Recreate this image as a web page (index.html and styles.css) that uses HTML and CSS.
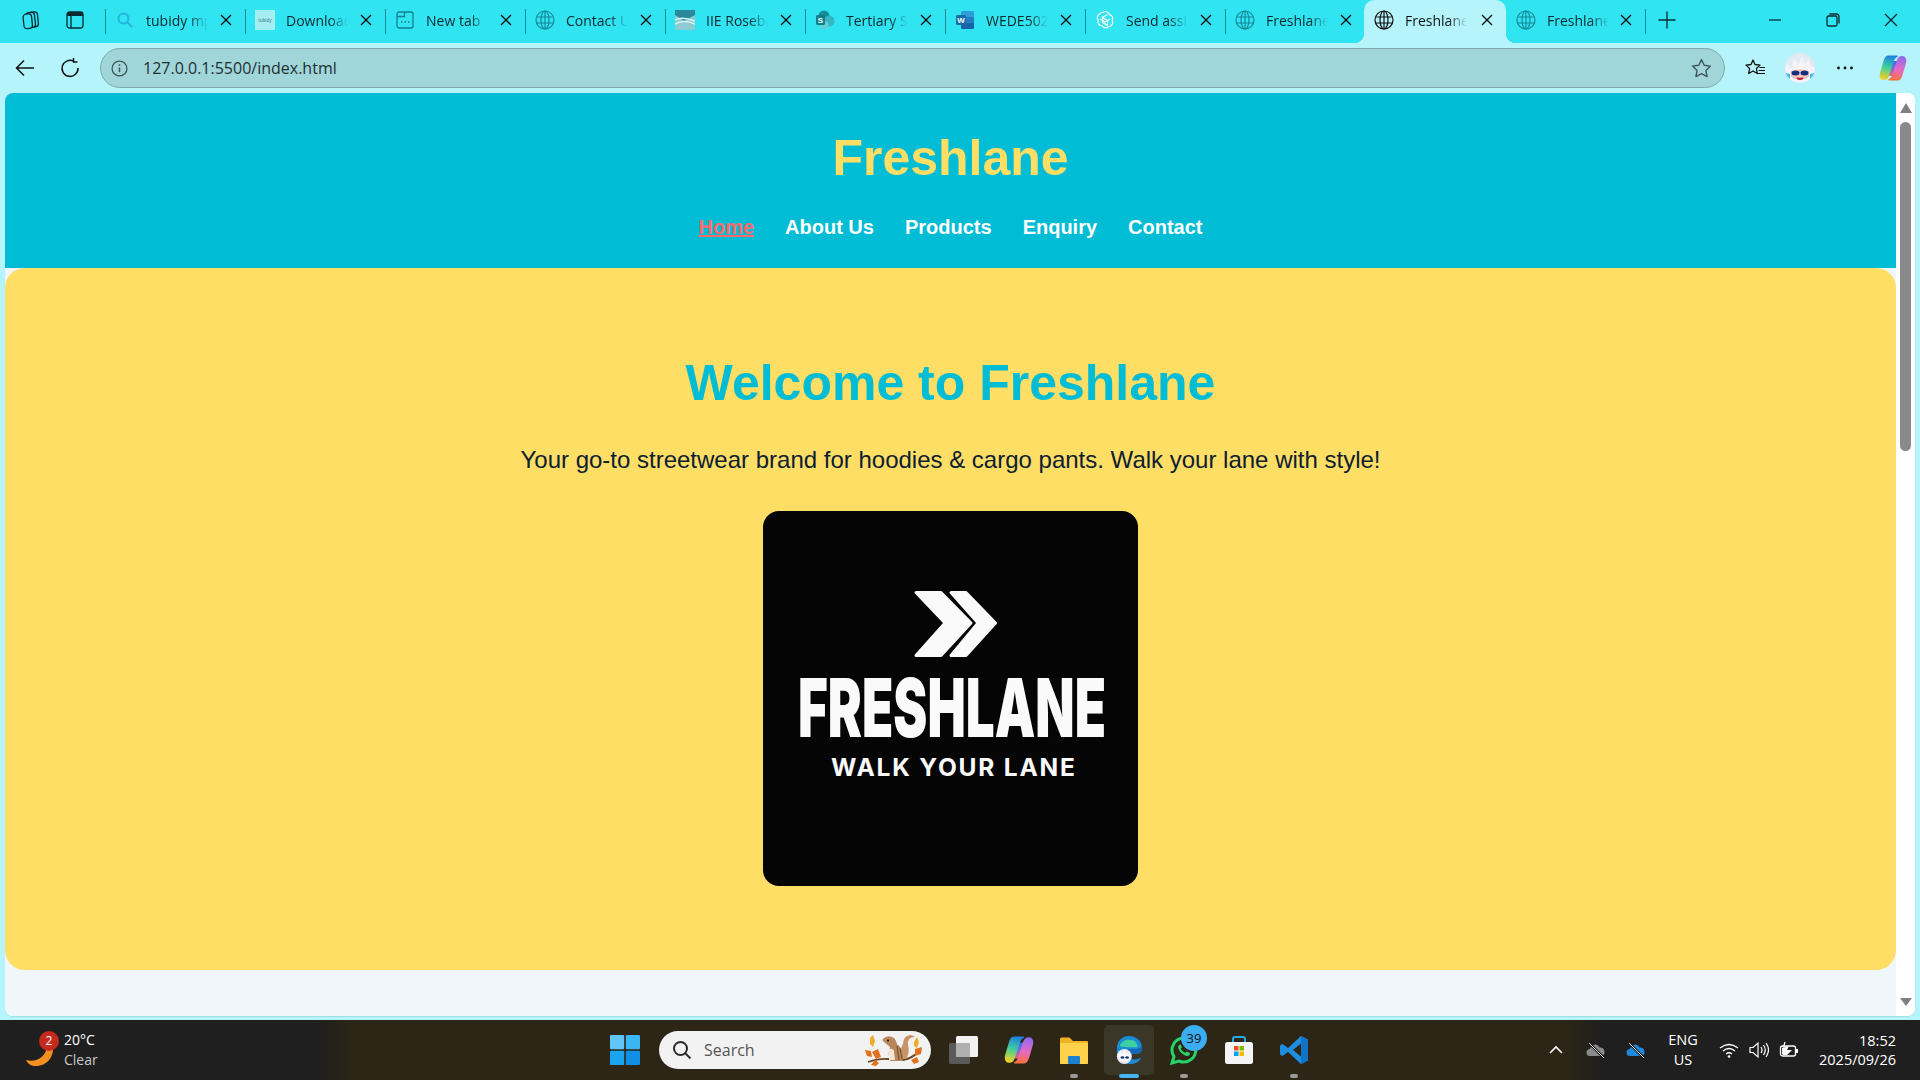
FILE: index.html
```html
<!DOCTYPE html>
<html lang="en">
<head>
<meta charset="utf-8">
<title>Freshlane</title>
<link rel="stylesheet" href="styles.css">
</head>
<body>
<div class="tabstrip">
  <div class="strip-tools">
    <svg class="ic20" viewBox="0 0 20 20"><rect x="8" y="2" width="9" height="15" rx="3" class="ln" transform="rotate(-6 12 10)"/><rect x="5" y="2.500" width="9" height="15" rx="3" class="ln fillstrip" transform="rotate(-6 10 10)"/><rect x="2.500" y="4" width="8.500" height="14.500" rx="3" class="ln fillstrip" transform="rotate(-6 7 11)"/></svg>
    <svg class="ic20" viewBox="0 0 20 20"><rect x="2" y="2" width="16" height="16" rx="2.500" class="ln"/><path d="M2 4.500a2.500 2.500 0 0 1 2.500-2.500h11a2.500 2.500 0 0 1 2.500 2.500V6H2z" fill="#0b2a30"/><path d="M6 6v12" class="ln"/></svg>
  </div>
  <div class="tab"><svg class="fav" viewBox="0 0 20 20"><circle cx="8.500" cy="8.500" r="5" fill="none" stroke="#25b5dc" stroke-width="2"/><path d="M12 12l5 5" stroke="#25b5dc" stroke-width="2"/></svg><span class="tab-title">tubidy mp3</span><svg class="x" viewBox="0 0 12 12"><use href="#close"/></svg></div>
  <div class="tab"><span class="fav tubidy">tubidy</span><span class="tab-title">Download</span><svg class="x" viewBox="0 0 12 12"><use href="#close"/></svg></div>
  <div class="tab"><svg class="fav" viewBox="0 0 20 20"><path d="M4 2h12a2 2 0 0 1 2 2v12a2 2 0 0 1-2 2H4a2 2 0 0 1-2-2V4a2 2 0 0 1 2-2zM2 6.500h7.500V2" fill="none" stroke="#137f8c" stroke-width="1.300"/><path d="M6 12h1.500M9.500 12H11M13 12h1.500" stroke="#137f8c" stroke-width="1.500"/></svg><span class="tab-title">New tab</span><svg class="x" viewBox="0 0 12 12"><use href="#close"/></svg></div>
  <div class="tab"><svg class="fav" viewBox="0 0 20 20"><use href="#globe" stroke="#178a98"/></svg><span class="tab-title">Contact Us</span><svg class="x" viewBox="0 0 12 12"><use href="#close"/></svg></div>
  <div class="tab"><svg class="fav" viewBox="0 0 20 20"><rect width="20" height="20" fill="#8ccbd3"/><path d="M0 0h20v5L9 11 0 5z" fill="#2a8a9c"/><path d="M0 10q7-4 20 1M0 14q9-5 20 0" fill="none" stroke="#d9f2f5" stroke-width="1.500"/></svg><span class="tab-title">IIE Rosebank</span><svg class="x" viewBox="0 0 12 12"><use href="#close"/></svg></div>
  <div class="tab"><svg class="fav" viewBox="0 0 20 20"><circle cx="9" cy="6" r="5.500" fill="#138f9b"/><circle cx="14" cy="11" r="5.500" fill="#35b6c2"/><circle cx="9" cy="15" r="4.500" fill="#5fd0d8"/><rect x="1" y="5" width="9" height="10" rx="1.500" fill="#0e7f8a"/><text x="5.500" y="13" class="fav-letter">S</text></svg><span class="tab-title">Tertiary Study</span><svg class="x" viewBox="0 0 12 12"><use href="#close"/></svg></div>
  <div class="tab"><svg class="fav" viewBox="0 0 20 20"><rect x="6" y="1" width="13" height="18" rx="1.500" fill="#2f9ed8"/><path d="M6 7h13v6H6z" fill="#1f7fc2"/><path d="M6 13h13v4.500a1.500 1.500 0 0 1-1.500 1.500H7.500A1.500 1.500 0 0 1 6 17.500z" fill="#1763a8"/><rect x="1" y="5" width="10" height="10" rx="1.200" fill="#136ba8"/><text x="6" y="13" class="fav-letter">W</text></svg><span class="tab-title">WEDE5020</span><svg class="x" viewBox="0 0 12 12"><use href="#close"/></svg></div>
  <div class="tab"><svg class="fav" viewBox="0 0 20 20"><path d="M8 2.500a4 4 0 0 1 6.500 2.200 4 4 0 0 1 2.700 6 4 4 0 0 1-3.500 5.800 4 4 0 0 1-6.500-.8 4 4 0 0 1-4-5.500 4 4 0 0 1 1.200-6 4 4 0 0 1 3.600-1.700zM7.500 6.500v6l5 3M12.500 4.500l-5 3 5 3v5M5 9l5 3 5-3" fill="none" stroke="#fff" stroke-width="1.200"/></svg><span class="tab-title">Send assignment</span><svg class="x" viewBox="0 0 12 12"><use href="#close"/></svg></div>
  <div class="tab"><svg class="fav" viewBox="0 0 20 20"><use href="#globe" stroke="#178a98"/></svg><span class="tab-title">Freshlane</span><svg class="x" viewBox="0 0 12 12"><use href="#close"/></svg></div>
  <div class="tab tab-active"><svg class="fav" viewBox="0 0 20 20"><use href="#globe" stroke="#111"/></svg><span class="tab-title">Freshlane</span><svg class="x" viewBox="0 0 12 12"><use href="#close"/></svg></div>
  <div class="tab tab-after"><svg class="fav" viewBox="0 0 20 20"><use href="#globe" stroke="#178a98"/></svg><span class="tab-title">Freshlane</span><svg class="x" viewBox="0 0 12 12"><use href="#close"/></svg></div>
  <div class="plus"><svg class="ic20" viewBox="0 0 20 20"><path d="M10 1.500v17M1.500 10h17" class="ln"/></svg></div>
  <div class="win-controls">
    <svg class="ic14" viewBox="0 0 14 14"><path d="M1 7h12" class="ln"/></svg>
    <svg class="ic14" viewBox="0 0 14 14"><rect x="1" y="3" width="10" height="10" rx="1.500" class="ln"/><path d="M3.500 1h7a2.500 2.500 0 0 1 2.500 2.500v7" class="ln"/></svg>
    <svg class="ic14" viewBox="0 0 14 14"><path d="M1 1l12 12M13 1L1 13" class="ln"/></svg>
  </div>
</div>

<div class="toolbar">
  <svg class="ic20 nav-ic" viewBox="0 0 20 20"><path d="M19 10H1.500M9 2.500L1.500 10 9 17.500" class="ln dark"/></svg>
  <svg class="ic20 nav-ic" viewBox="0 0 20 20"><path d="M13.500 3.200A8 8 0 1 0 18 10M13.500 0v4h4" class="ln dark"/></svg>
  <div class="address">
    <svg class="info" viewBox="0 0 16 16"><circle cx="8" cy="8" r="7" fill="none" stroke="#3d5558" stroke-width="1.200"/><path d="M8 7v4.500" stroke="#3d5558" stroke-width="1.400"/><circle cx="8" cy="4.800" r=".9" fill="#3d5558"/></svg>
    <span class="url">127.0.0.1:5500/index.html</span>
    <svg class="star" viewBox="0 0 20 20"><path d="M10 1.500l2.600 5.400 5.900.8-4.300 4.100 1.100 5.900L10 14.900l-5.300 2.800 1.100-5.900L1.500 7.700l5.900-.8z" fill="none" stroke="#3d5558" stroke-width="1.300" stroke-linejoin="round"/></svg>
  </div>
  <div class="tool-right">
    <svg class="ic20" viewBox="0 0 20 20"><path d="M8 2l2 4.500 5 .6-3.600 3.400.9 5-4.300-2.500-4.300 2.500.9-5L1 7.100l5-.6z" fill="none" stroke="#101010" stroke-width="1.300" stroke-linejoin="round"/><path d="M14.500 9.500H20M13.500 12.500H20M13 15.500h7" stroke="#101010" stroke-width="1.200"/></svg>
    <svg class="avatar" viewBox="0 0 30 30"><defs><clipPath id="av"><circle cx="15" cy="15" r="15"/></clipPath></defs><g clip-path="url(#av)"><rect width="30" height="30" fill="#dfeaf3"/><path d="M0 30V15l3-5 3 6 3-11 4 7 4-9 3 8 4-5 2 7 4 2v15z" fill="#f5f2f8"/><path d="M6 18q9-3 18 0v6q-9 5-18 0z" fill="#f0c3bd"/><ellipse cx="10.500" cy="20" rx="4" ry="2.500" fill="#142f7c"/><ellipse cx="19.500" cy="20" rx="4" ry="2.500" fill="#142f7c"/><path d="M12 25q3 2 6 0" stroke="#b6203c" stroke-width="2" fill="none"/><path d="M0 20l5 1v9H0zM30 20l-5 1v9h5z" fill="#49b7e8"/></g></svg>
    <svg class="ic20" viewBox="0 0 20 20"><circle cx="3.500" cy="10" r="1.400" fill="#111"/><circle cx="10" cy="10" r="1.400" fill="#111"/><circle cx="16.500" cy="10" r="1.400" fill="#111"/></svg>
    <svg class="copilot" viewBox="0 0 28 28"><use href="#copilot"/></svg>
  </div>
</div>

<div class="viewport">
  <div class="page">
    <header class="site-header">
      <h1 class="brand">Freshlane</h1>
      <nav class="site-nav">
        <a class="nav-link nav-current" href="#">Home</a>
        <a class="nav-link" href="#">About Us</a>
        <a class="nav-link" href="#">Products</a>
        <a class="nav-link" href="#">Enquiry</a>
        <a class="nav-link" href="#">Contact</a>
      </nav>
    </header>
    <main class="hero">
      <h2 class="hero-title">Welcome to Freshlane</h2>
      <p class="hero-text">Your go-to streetwear brand for hoodies &amp; cargo pants. Walk your lane with style!</p>
      <svg class="logo" viewBox="0 0 375 375" role="img" aria-label="Freshlane logo">
        <rect width="375" height="375" rx="16" fill="#050505"/>
        <path d="M153 81.500h25L208 112l-30 32.500h-25L182 112z" class="logo-chevron"/>
        <path d="M188 81.500h15L232.500 112 203 144.500h-15L215 112z" class="logo-chevron"/>
        <text x="35" y="226" class="logo-main" textLength="308" lengthAdjust="spacingAndGlyphs">FRESHLANE</text>
        <text x="68" y="265" class="logo-sub" textLength="244" lengthAdjust="spacing">WALK YOUR LANE</text>
      </svg>
    </main>
  </div>
  <div class="scrollbar">
    <span class="arrow-up"></span>
    <span class="thumb"></span>
    <span class="arrow-down"></span>
  </div>
</div>

<div class="taskbar">
  <div class="weather">
    <div class="weather-icon">
      <svg class="moon" viewBox="0 0 28 24"><path d="M27 2c1 11-6 20-17 20C5 22 2 20 0 16c10 3 20-3 21-14z" fill="#f2901f"/></svg>
      <span class="badge-red">2</span>
    </div>
    <div class="weather-text"><span class="temp">20°C</span><span class="cond">Clear</span></div>
  </div>
  <div class="task-center">
    <svg class="task-ic" viewBox="0 0 30 30"><rect x="0" y="0" width="14.200" height="14.200" rx="1" fill="#5fc6f7"/><rect x="15.800" y="0" width="14.200" height="14.200" rx="1" fill="#3ab6f5"/><rect x="0" y="15.800" width="14.200" height="14.200" rx="1" fill="#1aa3ef"/><rect x="15.800" y="15.800" width="14.200" height="14.200" rx="1" fill="#0f90e6"/></svg>
    <div class="search">
      <svg class="search-ic" viewBox="0 0 20 20"><circle cx="8.500" cy="8.500" r="6.500" fill="none" stroke="#2a2a2a" stroke-width="2"/><path d="M13 13l5.500 5.500" stroke="#2a2a2a" stroke-width="2"/></svg>
      <span class="search-label">Search</span>
      <svg class="squirrel" viewBox="0 0 60 32">
        <path d="M3 28q12-4 20-3t16 1q8-2 13-7" stroke="#6d4526" stroke-width="1.800" fill="none"/>
        <path d="M0 16l6 1 1 6-5-1zM7 18l6-3 3 8-5 2zM50 15l7-2-1 7-6 2zM46 26l6-3 2 5-5 2zM6 31l4-5 4 3-3 3z" fill="#e2711d"/>
        <path d="M5 4l3-3 2 6-2 6-3-3zM49 8l3-5 2 5-2 6-3-2z" fill="#eeab2d"/>
        <path d="M37 25q-3-9 1-15 0-8 7-9 3 0 5 2-8 0-7 8 2 8-2 14z" fill="#c79468"/>
        <path d="M19 8q-3-2 0-4 4-3 8-1 3 1 4 4l1 3q6 4 6 17l-12 0q-4-6-1-14z" fill="#b9875a"/>
        <path d="M32 12l2 14M35 14l2 11" stroke="#6b4a2c" stroke-width="1"/>
        <path d="M24 15q4-1 5 2l1 9h-6z" fill="#f3e6d4"/>
        <circle cx="23" cy="6.500" r="1" fill="#111"/>
      </svg>
    </div>
    <svg class="task-ic" viewBox="0 0 30 30"><rect x="0" y="8" width="21" height="21" rx="1.500" fill="#5a5a5a"/><rect x="7" y="1" width="22" height="21" rx="1.500" fill="#f2f2f2"/><rect x="7" y="8" width="14" height="14" fill="#b0b0b0"/></svg>
    <svg class="task-ic" viewBox="0 0 28 28"><use href="#copilot"/></svg>
    <div class="app">
      <svg class="task-ic" viewBox="0 0 30 30"><path d="M1 4a1.500 1.500 0 0 1 1.500-1.500h8L14 6h14a1 1 0 0 1 1 1v21a1 1 0 0 1-1 1H2a1 1 0 0 1-1-1z" fill="#f0b323"/><rect x="1" y="8" width="28" height="21" rx="1" fill="#ffd24d"/><rect x="9" y="21" width="12" height="8" rx="1" fill="#1c7fd0"/></svg>
      <span class="dot"></span>
    </div>
    <div class="app app-active">
      <svg class="task-ic" viewBox="0 0 30 32"><path d="M2 15C2 6 8 1 15 1c8 0 14 6 14 13 0 4-3 6-7 6h-8c0 3 3 6 7 6 3 0 5-1 7-2-2 5-7 7-12 7C7 31 2 24 2 15z" fill="#1b8bd3"/><path d="M5 12c2-5 6-7 10-7 6 0 9 3 9 8h-9c-5 0-8-1-10-1z" fill="#3fd0a0"/><path d="M14 20h8c4 0 7-2 7-6 0-7-6-13-14-13 9 0 13 5 13 10 0 3-3 4-6 4h-8z" fill="#1565b5"/><circle cx="10" cy="23" r="8" fill="#e9e6f0"/><path d="M3 21l3-4 2 3 2-5 3 5 2-3 2 5q-1 4-3 6H6q-2-2-3-7z" fill="#fbfbff"/><ellipse cx="8" cy="24" rx="2" ry="1.300" fill="#15337c"/><ellipse cx="13" cy="24" rx="2" ry="1.300" fill="#15337c"/></svg>
      <span class="dot dot-active"></span>
    </div>
    <div class="app">
      <svg class="task-ic" viewBox="0 0 30 30"><path d="M15 3a12 12 0 0 0-10 18.500L3 28l7-2A12 12 0 1 0 15 3z" fill="none" stroke="#25d366" stroke-width="3"/><path d="M10 10c-2 2 0 6 3 8.500s6 3.500 7.500 1.500l.5-2-3.500-1.500-1.300 1.300c-2-.8-3.500-2.300-4.500-4.300l1.300-1.300-1.500-3z" fill="#25d366"/></svg>
      <span class="count">39</span>
      <span class="dot"></span>
    </div>
    <div class="app">
      <svg class="task-ic" viewBox="0 0 30 30"><path d="M9 8V4a2 2 0 0 1 2-2h8a2 2 0 0 1 2 2v4" fill="none" stroke="#25a8e0" stroke-width="2"/><rect x="1" y="7" width="28" height="22" rx="2.500" fill="#f4f4f4"/><rect x="10" y="11" width="4.500" height="4.500" fill="#f25022"/><rect x="15.500" y="11" width="4.500" height="4.500" fill="#7fba00"/><rect x="10" y="16.500" width="4.500" height="4.500" fill="#00a4ef"/><rect x="15.500" y="16.500" width="4.500" height="4.500" fill="#ffb900"/></svg>
    </div>
    <div class="app">
      <svg class="task-ic" viewBox="0 0 30 30"><path d="M22 1l7 3.500v21L22 29 9 17l-5.500 4L1 19.500v-9L3.500 9 9 13zM22 8.500L14 15l8 6.500z" fill="#1e8fe0"/><path d="M22 1l7 3.500v21L22 29z" fill="#0f74c6"/></svg>
      <span class="dot"></span>
    </div>
  </div>
  <div class="tray">
    <svg class="tray-ic" viewBox="0 0 20 20"><path d="M4 13l6-6 6 6" fill="none" stroke="#fff" stroke-width="1.600"/></svg>
    <svg class="tray-ic" viewBox="0 0 20 20"><path d="M4 16a3.500 3.500 0 0 1 0-7 5 5 0 0 1 9.500-1.500A4.500 4.500 0 0 1 16 16z" fill="#8a8a8a"/><path d="M3 3l15 15" stroke="#1f1f1f" stroke-width="2.500"/><path d="M3 3l15 15" stroke="#ddd" stroke-width="1"/></svg>
    <svg class="tray-ic" viewBox="0 0 20 20"><path d="M4 16a3.500 3.500 0 0 1 0-7 5 5 0 0 1 9.500-1.500A4.500 4.500 0 0 1 16 16z" fill="#1e88dc"/><path d="M3 3l15 15" stroke="#1f1f1f" stroke-width="2.500"/><path d="M3 3l15 15" stroke="#ddd" stroke-width="1"/></svg>
    <div class="lang"><span>ENG</span><span>US</span></div>
    <div class="sys-icons">
      <svg class="tray-ic" viewBox="0 0 20 20"><path d="M1 8q9-7 18 0M4 11q6-5 12 0M7 14q3-2.500 6 0" fill="none" stroke="#fff" stroke-width="1.300"/><circle cx="10" cy="16.500" r="1.300" fill="#fff"/></svg>
      <svg class="tray-ic" viewBox="0 0 20 20"><path d="M1 7.500v5h3l5 4.500V3L4 7.500z" fill="none" stroke="#fff" stroke-width="1.200"/><path d="M12 7q2 3 0 6M14.500 5q3.500 5 0 10M17 3q5 7 0 14" fill="none" stroke="#fff" stroke-width="1.200"/></svg>
      <svg class="tray-ic" viewBox="0 0 20 20"><rect x="1.500" y="6" width="15" height="10" rx="2" fill="none" stroke="#fff" stroke-width="1.300"/><rect x="17" y="9" width="2" height="4" fill="#fff"/><path d="M3 14V8l4-1 3-1-2 4h5l-5 5H4z" fill="#fff"/><path d="M6 2l-1.500 5H8" fill="none" stroke="#fff" stroke-width="1.200"/></svg>
    </div>
    <div class="clock"><span>18:52</span><span>2025/09/26</span></div>
  </div>
</div>

<svg class="defs" aria-hidden="true">
  <defs>
    <g id="globe" fill="none" stroke-width="1.200"><circle cx="10" cy="10" r="9"/><ellipse cx="10" cy="10" rx="4" ry="9"/><path d="M1.500 7h17M1.500 13h17M10 1v18"/></g>
    <path id="close" d="M1 1l10 10M11 1L1 11" fill="none" stroke="#111" stroke-width="1.400"/>
    <linearGradient id="cpA" x1="0.600" y1="0" x2="0.400" y2="1"><stop offset="0" stop-color="#1d7fe0"/><stop offset=".5" stop-color="#3fcf9a"/><stop offset="1" stop-color="#f4d21f"/></linearGradient>
    <linearGradient id="cpB" x1="0.600" y1="0" x2="0.400" y2="1"><stop offset="0" stop-color="#8f6bf0"/><stop offset=".55" stop-color="#e96ac0"/><stop offset="1" stop-color="#f8713c"/></linearGradient>
    <linearGradient id="cpC" x1="0.700" y1="0" x2="0.300" y2="1"><stop offset="0" stop-color="#2c6fe6"/><stop offset=".5" stop-color="#7a6ae8"/><stop offset="1" stop-color="#ee5f7c"/></linearGradient>
    <g id="copilot"><path d="M13 7h6l-4 15H9z" fill="url(#cpC)"/><path d="M9 1.500h9c1 0 1 1 0 1.500-2 1-3 3-3.500 5L10 22c-.8 2.500-2.500 4-5 4-3.500 0-5-3-4-7L4.500 7C5.500 3.500 7 1.500 9 1.500z" fill="url(#cpA)"/><path d="M19 26.500h-9c-1 0-1-1 0-1.500 2-1 3-3 3.500-5L18 6c.8-2.500 2.500-4 5-4 3.500 0 5 3 4 7l-3.500 12c-1 3.500-2.500 5.500-4.500 5.500z" fill="url(#cpB)"/></g>
  </defs>
</svg>
</body>
</html>
```

FILE: styles.css
```css
* { box-sizing: border-box; }
html, body { margin: 0; height: 100%; overflow: hidden; }
body {
  width: 1920px;
  height: 1080px;
  display: flex;
  flex-direction: column;
  font-family: "Liberation Sans", Arial, sans-serif;
  background: #b5f4fb;
}
.defs { position: absolute; width: 0; height: 0; }

.ln { fill: none; stroke: #0b2a30; stroke-width: 1.300; }
.ln.dark { stroke: #111; stroke-width: 1.500; }
.fillstrip { fill: #30e4f2; }
.ic20 { width: 20px; height: 20px; flex: none; }
.ic14 { width: 14px; height: 14px; flex: none; }

/* Tab strip */
.tabstrip {
  height: 43px;
  flex: none;
  display: flex;
  align-items: stretch;
  background: #30e4f2;
  padding-left: 21px;
}
.strip-tools { width: 84px; display: flex; align-items: center; gap: 24px; flex: none; padding-bottom: 3px; }
.tab {
  width: 140px;
  flex: none;
  display: flex;
  align-items: center;
  padding: 0 13px 3px 10px;
  position: relative;
  font-family: "Open Sans", "Noto Sans", sans-serif;
  font-size: 14px;
  color: #10282c;
}
.tab::before {
  content: "";
  position: absolute;
  left: 0;
  top: 9px;
  height: 25px;
  width: 1px;
  background: #1c8a97;
}
.tab-active {
  width: 142px;
  background: #b5f4fb;
  border-radius: 10px 10px 0 0;
  color: #111;
  margin-left: -1px;
  z-index: 1;
}
.tab-after::before { display: none; }
.tab-active::before, .tab-active::after {
  content: "";
  position: absolute;
  bottom: 0;
  top: auto;
  width: 10px;
  height: 10px;
}
.tab-active::before {
  left: -10px;
  background: radial-gradient(circle at 0 0, transparent 10px, #b5f4fb 10.500px);
}
.tab-active::after {
  right: -10px;
  background: radial-gradient(circle at 100% 0, transparent 10px, #b5f4fb 10.500px);
}
.tab-after { width: 139px; }
.fav { width: 20px; height: 20px; flex: none; margin-right: 11px; }
.fav-letter { font: 700 8px "Liberation Sans", sans-serif; fill: #fff; text-anchor: middle; }
.tubidy {
  background: #a6edf2;
  font: 5px "Liberation Sans", sans-serif;
  color: #3a7f87;
  display: flex;
  align-items: center;
  justify-content: center;
}
.tab-title {
  width: 62px;
  flex: none;
  overflow: hidden;
  white-space: nowrap;
  -webkit-mask-image: linear-gradient(90deg, #000 70%, transparent 100%);
  mask-image: linear-gradient(90deg, #000 70%, transparent 100%);
}
.x { margin-left: auto; width: 12px; height: 12px; flex: none; }
.plus { width: 44px; flex: none; display: flex; align-items: center; justify-content: center; position: relative; padding-bottom: 3px; }
.plus::before {
  content: "";
  position: absolute;
  left: 0;
  top: 9px;
  height: 25px;
  width: 1px;
  background: #1c8a97;
}
.win-controls {
  margin-left: auto;
  padding-right: 22px;
  display: flex;
  align-items: center;
  gap: 44px;
  padding-bottom: 3px;
}

/* Toolbar */
.toolbar {
  height: 50px;
  flex: none;
  display: flex;
  align-items: center;
  padding: 0 0 0 15px;
  background: #b5f4fb;
}
.nav-ic { margin-right: 25px; }
.nav-ic + .nav-ic { margin-right: 20px; }
.address {
  flex: none;
  width: 1625px;
  height: 40px;
  display: flex;
  align-items: center;
  background: #a0d5da;
  border: 1px solid #7fa8ac;
  border-radius: 20px;
  padding: 0 12px 0 10px;
}
.info { width: 17px; height: 17px; flex: none; }
.url { margin-left: 15px; font-family: "Open Sans", "Noto Sans", sans-serif; font-size: 16px; color: #1f3032; }
.star { width: 21px; height: 21px; margin-left: auto; }
.tool-right { display: flex; align-items: center; gap: 20px; padding-left: 20px; }
.avatar { width: 30px; height: 30px; flex: none; }
.copilot { width: 28px; height: 28px; flex: none; margin-left: 4px; }

/* Viewport */
.viewport {
  flex: none;
  height: 923px;
  width: 1910px;
  margin: 0 5px 4px;
  display: flex;
  background: #fff;
  border-radius: 8px;
  overflow: hidden;
  box-shadow: 0 1px 0 #9fdfe6;
}
.page { width: 1891px; flex: none; background: #f0f7fb; }
.scrollbar {
  width: 19px;
  flex: none;
  background: #fff;
  display: flex;
  flex-direction: column;
  align-items: center;
  padding: 10px 0;
}
.arrow-up { border: 6.500px solid transparent; border-top: 0; border-bottom: 10px solid #808080; margin-bottom: 9px; }
.thumb { width: 11px; height: 329px; background: #8a8a8a; border-radius: 5.500px; }
.arrow-down { border: 6.500px solid transparent; border-bottom: 0; border-top: 8px solid #808080; margin-top: auto; }

.site-header {
  height: 175px;
  background: #00bcd4;
  display: flex;
  flex-direction: column;
  align-items: center;
  padding-top: 36px;
}
.brand { margin: 0; font-size: 50px; line-height: 58px; font-weight: 700; color: #ffde66; }
.site-nav { display: flex; gap: 31px; margin-top: 29px; }
.nav-link { font-size: 20px; line-height: 23px; font-weight: 700; color: #fff; text-decoration: none; }
.nav-current { color: #ff6b6b; text-decoration: underline; }

.hero {
  height: 702px;
  background: #ffde66;
  border-radius: 20px;
  display: flex;
  flex-direction: column;
  align-items: center;
  padding-top: 86px;
}
.hero-title { margin: 0; font-size: 50px; line-height: 58px; font-weight: 700; color: #00bcd4; }
.hero-text { margin: 33px 0 0; font-size: 24px; line-height: 29px; color: #0d2030; }
.logo { width: 375px; height: 375px; margin-top: 37px; flex: none; display: block; }
.logo-chevron { fill: #fafafa; stroke: #fafafa; stroke-width: 3; stroke-linejoin: round; }
.logo-main { font: 900 81px "Inter", "Liberation Sans", sans-serif; fill: #fafafa; }
.logo-sub { font: 700 24.500px "Inter", "Liberation Sans", sans-serif; fill: #fafafa; }

/* Taskbar */
.taskbar {
  flex: 1;
  position: relative;
  display: flex;
  align-items: center;
  background: linear-gradient(90deg, #1f1f1f 0, #1f1f1f 16.500%, #2d2617 18.500%, #2d2617 81.500%, #1f1f1f 83.500%, #1f1f1f 100%);
  color: #fff;
  font-family: "Open Sans", "Noto Sans", sans-serif;
  padding: 0 24px 0 26px;
}
.weather { width: 584px; display: flex; align-items: center; gap: 8px; flex: none; }
.weather-icon { width: 30px; height: 40px; position: relative; flex: none; }
.moon { width: 28px; height: 24px; position: absolute; left: 0; bottom: 2px; }
.badge-red {
  position: absolute;
  top: 1px;
  left: 13px;
  width: 20px;
  height: 20px;
  border-radius: 50%;
  background: #c42b1c;
  font-size: 12px;
  line-height: 20px;
  text-align: center;
}
.weather-text { display: flex; flex-direction: column; font-size: 14px; line-height: 20px; }
.cond { color: #c8c8c8; }
.task-center { display: flex; align-items: center; gap: 25px; }
.task-ic { width: 30px; height: 30px; flex: none; display: block; }
.search {
  width: 272px;
  height: 38px;
  border-radius: 19px;
  background: #f2f2f2;
  display: flex;
  align-items: center;
  padding: 0 6px 0 13px;
  margin: 0 -7px 0 -6px;
  flex: none;
}
.search-ic { width: 20px; height: 20px; flex: none; }
.search-label { margin-left: 12px; font-size: 16px; color: #555; }
.squirrel { width: 60px; height: 32px; margin-left: auto; }
.app { position: relative; width: 30px; height: 30px; flex: none; }
.app-active::before {
  content: "";
  position: absolute;
  left: -10px;
  top: -10px;
  width: 50px;
  height: 50px;
  border-radius: 5px;
  background: #3a3628;
}
.app-active .task-ic { position: relative; }
.dot { position: absolute; left: 11px; bottom: -13px; width: 8px; height: 4px; border-radius: 2px; background: #9a9a9a; }
.dot-active { left: 5px; width: 20px; background: #45b4f0; }
.count {
  position: absolute;
  left: 12px;
  top: -10px;
  width: 26px;
  height: 26px;
  border-radius: 50%;
  background: #3aaef0;
  color: #111;
  font-size: 13px;
  line-height: 26px;
  text-align: center;
}
.tray { margin-left: auto; display: flex; align-items: center; }
.tray-ic { width: 20px; height: 20px; flex: none; }
.tray > .tray-ic { margin-right: 20px; }
.lang { display: flex; flex-direction: column; align-items: center; width: 34px; font-size: 14.500px; line-height: 20px; margin: 0 19px 0 0; }
.sys-icons { display: flex; gap: 10px; margin-right: 20px; }
.clock { display: flex; flex-direction: column; align-items: flex-end; font-size: 14.500px; line-height: 19px; }
```
